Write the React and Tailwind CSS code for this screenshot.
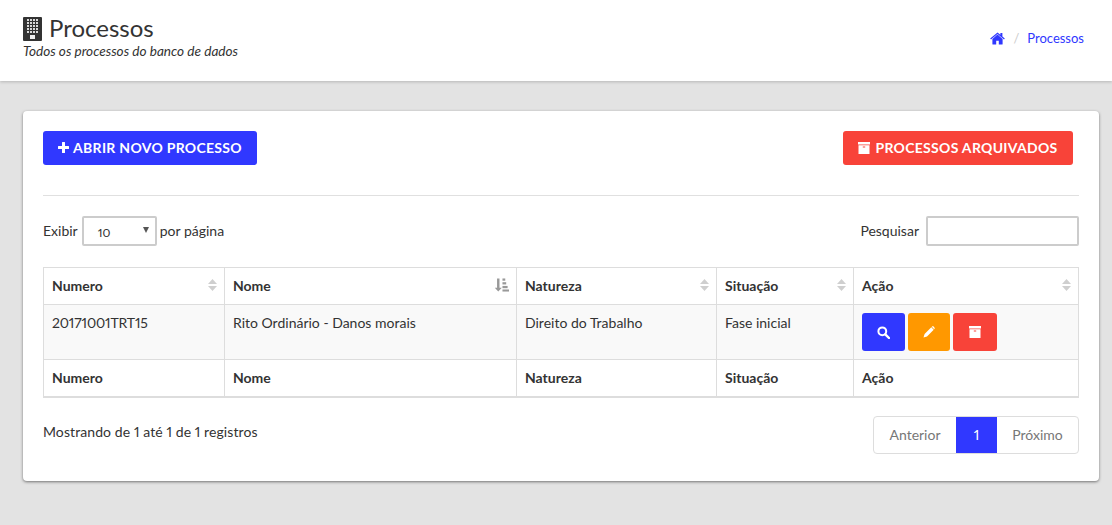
import React from 'react';

const columns = [
  { label: 'Numero', width: 'w-[181px]' },
  { label: 'Nome', width: 'w-[292px]', sorted: true },
  { label: 'Natureza', width: 'w-[200px]' },
  { label: 'Situação', width: 'w-[137px]' },
  { label: 'Ação', width: 'w-[225px]' }
];

const BuildingIcon = () => (
  <svg width="19" height="24" viewBox="0 0 19 24" className="shrink-0">
    <rect width="19" height="24" rx="1" fill="#333333" />
    {[3, 6, 9, 12, 15].map((y) =>
      [4, 7, 10, 13].map((x) => (
        <rect key={`${x}-${y}`} x={x} y={y - 1} width="2" height="2" fill="#d9d9d9" />
      ))
    )}
    <rect x="7" y="18" width="5" height="4" fill="#f0f0f0" />
  </svg>
);

const HomeIcon = () => (
  <svg width="15" height="13" viewBox="0 0 15 13" fill="#3038ff">
    <path d="M7.5 2.6 2.400 6.9V12a.6.6 0 0 0 .6.6h3.200V8.800h2.600v3.800H12a.6.6 0 0 0 .6-.6V6.900z" />
    <path d="M7.5 0.4 0.200 6.400l.8 1 6.500-5.400 6.500 5.400.8-1-2.400-2V1h-2v1.800z" />
  </svg>
);

const PlusIcon = () => (
  <svg width="11" height="11" viewBox="0 0 11 11" fill="#ffffff">
    <path d="M4 .5a.5.5 0 0 1 .5-.5h2a.5.5 0 0 1 .5.5V4h3.500a.5.5 0 0 1 .5.5v2a.5.5 0 0 1-.5.5H7v3.500a.5.5 0 0 1-.5.5h-2a.5.5 0 0 1-.5-.5V7H.5A.5.5 0 0 1 0 6.500v-2A.5.5 0 0 1 .5 4H4z" />
  </svg>
);

const ArchiveIcon = () => (
  <svg width="12" height="12" viewBox="0 0 12 12" fill="#ffffff">
    <rect width="12" height="2.500" />
    <path d="M.5 3.300h11V12H.5zM4.800 4.500v.9h2.400v-.9z" fillRule="evenodd" />
  </svg>
);

const SearchIcon = () => (
  <svg width="13" height="13" viewBox="0 0 13 13" fill="none" stroke="#ffffff">
    <circle cx="5.300" cy="5.300" r="3.900" strokeWidth="2" />
    <path d="M8.300 8.300 12 12" strokeWidth="2.400" strokeLinecap="round" />
  </svg>
);

const PencilIcon = () => (
  <svg width="12" height="12" viewBox="0 0 12 12" fill="#ffffff">
    <path d="M8.300 1.300 10.700 3.700 4 10.400.5 11.500 1.600 8zM9 .6c.5-.5 1.100-.5 1.600 0l.8.8c.5.5.5 1.100 0 1.600l-.2.2L8.800.8z" />
  </svg>
);

const SortIcon = () => (
  <svg width="9" height="12" viewBox="0 0 9 12" fill="#cfcfcf" className="shrink-0">
    <path d="M4.500 0 9 5H0z" />
    <path d="M4.500 12 0 7h9z" />
  </svg>
);

const SortedIcon = () => (
  <svg width="14" height="14" viewBox="0 0 15 14" fill="#999999" className="shrink-0">
    <path d="M2.200 0h2.600v10H7.300l-3.800 4L-.3 10h2.500z" />
    <rect x="8" y="0" width="3" height="2.400" />
    <rect x="8" y="4" width="4" height="2.400" />
    <rect x="8" y="8" width="5.500" height="2.400" />
    <rect x="8" y="11.800" width="7" height="2.200" />
  </svg>
);

export default function App() {
  return (
    <div className="min-h-[525px] bg-[#e3e3e3] font-['Lato',sans-serif] text-[14px] text-[#333333] proportional-nums">
      <header className="flex h-[81px] items-start justify-between bg-white pl-[23px] pr-[28px] shadow-[0_1px_3px_rgba(0,0,0,0.2)]">
        <div className="pt-[16px]">
          <div className="flex h-[25px] items-center gap-[7px]">
            <BuildingIcon />
            <h1 className="pb-[2px] text-[24px] leading-[25px] text-[#333333]">Processos</h1>
          </div>
          <p className="text-[13.6px] leading-[20px] italic">Todos os processos do banco de dados</p>
        </div>
        <nav className="flex items-center pt-[28px] text-[13px] leading-[20px] text-[#3038ff]">
          <HomeIcon />
          <span className="mx-[8px] text-[#cccccc]">/</span>
          <span>Processos</span>
        </nav>
      </header>

      <main className="ml-[23px] mt-[30px] h-[370px] w-[1076px] rounded-[4px] bg-white p-[20px] shadow-[0_1px_3px_rgba(0,0,0,0.5)]">
        <div className="flex items-center justify-between pr-[6px]">
          <button className="flex h-[34px] w-[214px] items-center justify-center gap-[4px] rounded-[3px] bg-[#3038ff] pb-[1px] text-[14px] font-bold tracking-[0.3px] text-white">
            <PlusIcon />
            ABRIR NOVO PROCESSO
          </button>
          <button className="flex h-[34px] w-[230px] items-center justify-center gap-[5px] rounded-[3px] bg-[#f84339] pb-[1px] text-[14px] font-bold tracking-[0.3px] text-white">
            <ArchiveIcon />
            PROCESSOS ARQUIVADOS
          </button>
        </div>

        <hr className="mt-[30px] border-t border-[#e0e0e0]" />

        <div className="mt-[20px] flex h-[30px] items-center justify-between">
          <div className="flex items-center gap-[3px]">
            <span className="mr-[1px] pb-[2px]">Exibir</span>
            <div className="flex h-[30px] w-[75px] items-center justify-between rounded-[2px] border-2 border-[#cccccc] pl-[14px] pr-[6px] text-[12px]">
              <span className="pt-[3px]">10</span>
              <span className="-mt-[2px] h-0 w-0 border-x-[3.500px] border-t-[6px] border-x-transparent border-t-[#555555]" />
            </div>
            <span className="pb-[2px]">por página</span>
          </div>
          <div className="flex items-center gap-[7px]">
            <span className="pb-[2px]">Pesquisar</span>
            <input className="h-[30px] w-[153px] rounded-[2px] border-2 border-[#cccccc] bg-white" />
          </div>
        </div>

        <table className="mt-[21px] w-[1035px] table-fixed border-collapse border-b-2 border-[#dddddd]">
          <colgroup>
            {columns.map((col) => (
              <col key={col.label} className={col.width} />
            ))}
          </colgroup>
          <thead>
            <tr className="h-[37px]">
              {columns.map((col) => (
                <th key={col.label} className="border border-[#dddddd] pl-[8px] pr-[7px] py-0 text-left font-bold">
                  <div className="flex items-center justify-between pb-[2px]">
                    <span>{col.label}</span>
                    {col.sorted ? <SortedIcon /> : <SortIcon />}
                  </div>
                </th>
              ))}
            </tr>
          </thead>
          <tbody>
            <tr className="h-[55px] bg-[#f9f9f9] align-top">
              <td className="border border-[#dddddd] px-[8px] pt-[7px] tracking-[-0.15px]">20171001TRT15</td>
              <td className="border border-[#dddddd] px-[8px] pt-[7px]">Rito Ordinário - Danos morais</td>
              <td className="border border-[#dddddd] px-[8px] pt-[7px]">Direito do Trabalho</td>
              <td className="border border-[#dddddd] px-[8px] pt-[7px]">Fase inicial</td>
              <td className="border border-[#dddddd] px-[8px] pt-[8px]">
                <div className="flex gap-[3px]">
                  <button className="flex h-[38px] w-[43px] items-center justify-center rounded-[3px] bg-[#3038ff]">
                    <SearchIcon />
                  </button>
                  <button className="flex h-[38px] w-[42px] items-center justify-center rounded-[3px] bg-[#ff9800]">
                    <PencilIcon />
                  </button>
                  <button className="flex h-[38px] w-[44px] items-center justify-center rounded-[3px] bg-[#f84339]">
                    <ArchiveIcon />
                  </button>
                </div>
              </td>
            </tr>
          </tbody>
          <tfoot>
            <tr className="h-[37px]">
              {columns.map((col) => (
                <th key={col.label} className="border border-[#dddddd] px-[8px] py-0 text-left font-bold">
                  {col.label}
                </th>
              ))}
            </tr>
          </tfoot>
        </table>

        <div className="mt-[18px] flex items-start justify-between">
          <p className="pt-[6px] leading-[20px] tracking-[0.09px]">Mostrando de 1 até 1 de 1 registros</p>
          <div className="flex h-[38px] w-[206px] overflow-hidden rounded-[4px] border border-[#dddddd] text-[#777777]">
            <span className="flex w-[82px] items-center justify-center">Anterior</span>
            <span className="-my-px flex w-[41px] items-center justify-center bg-[#3038ff] text-white">1</span>
            <span className="flex flex-1 items-center justify-center">Próximo</span>
          </div>
        </div>
      </main>
    </div>
  );
}
